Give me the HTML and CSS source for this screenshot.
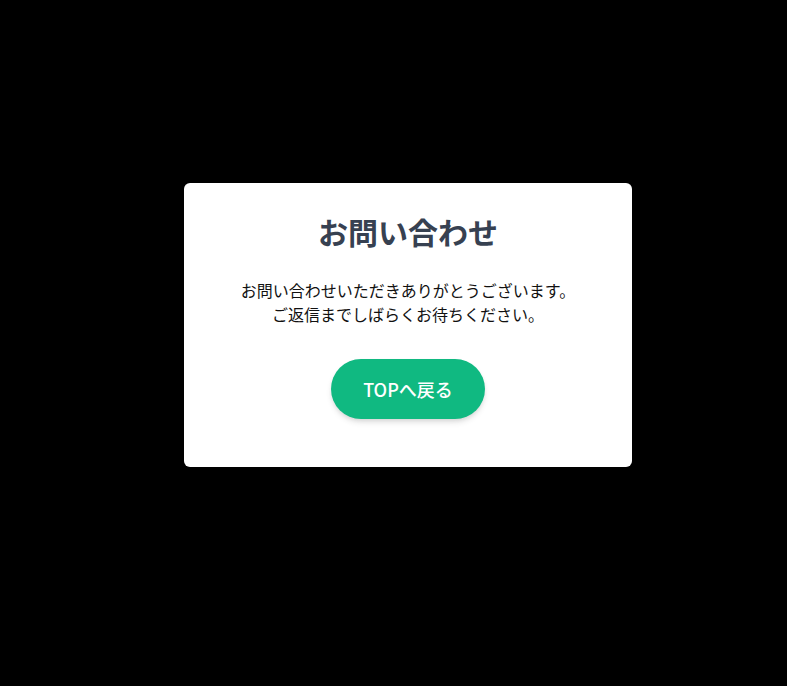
FILE: index.html
```html
<!DOCTYPE html>
<html lang="ja">
<head>
<meta charset="utf-8">
<link rel="stylesheet" href="styles.css">
</head>
<body>
<div class="overlay">
  <div class="card">
    <h1 class="title">お問い合わせ</h1>
    <p class="message">お問い合わせいただきありがとうございます。<br>ご返信までしばらくお待ちください。</p>
    <a class="button" href="#">TOPへ戻る</a>
  </div>
</div>
</body>
</html>
```
FILE: styles.css
```css
html, body {
  margin: 0;
  padding: 0;
  background: #000;
  height: 100%;
}
body {
  font-family: "Noto Sans CJK JP", "Noto Sans", sans-serif;
}
.overlay {
  display: flex;
  align-items: flex-start;
  justify-content: flex-start;
  padding: 183px 0 0 184px;
}
.card {
  width: 448px;
  box-sizing: border-box;
  background: #fff;
  border-radius: 6px;
  padding: 30px 32px 48px;
  display: flex;
  flex-direction: column;
  align-items: center;
  text-align: center;
}
.title {
  margin: 0;
  font-size: 30px;
  line-height: 36px;
  font-weight: 700;
  color: #374151;
}
.message {
  margin: 29px 0 0;
  font-size: 16px;
  line-height: 24px;
  color: #111;
}
.button {
  margin-top: 33px;
  display: inline-block;
  background: #10b981;
  color: #fff;
  text-decoration: none;
  font-size: 18px;
  line-height: 28px;
  font-weight: 500;
  padding: 16px 32px;
  border-radius: 9999px;
  box-shadow: 0 4px 6px -1px rgba(0,0,0,0.12), 0 2px 4px -1px rgba(0,0,0,0.08);
}
```
